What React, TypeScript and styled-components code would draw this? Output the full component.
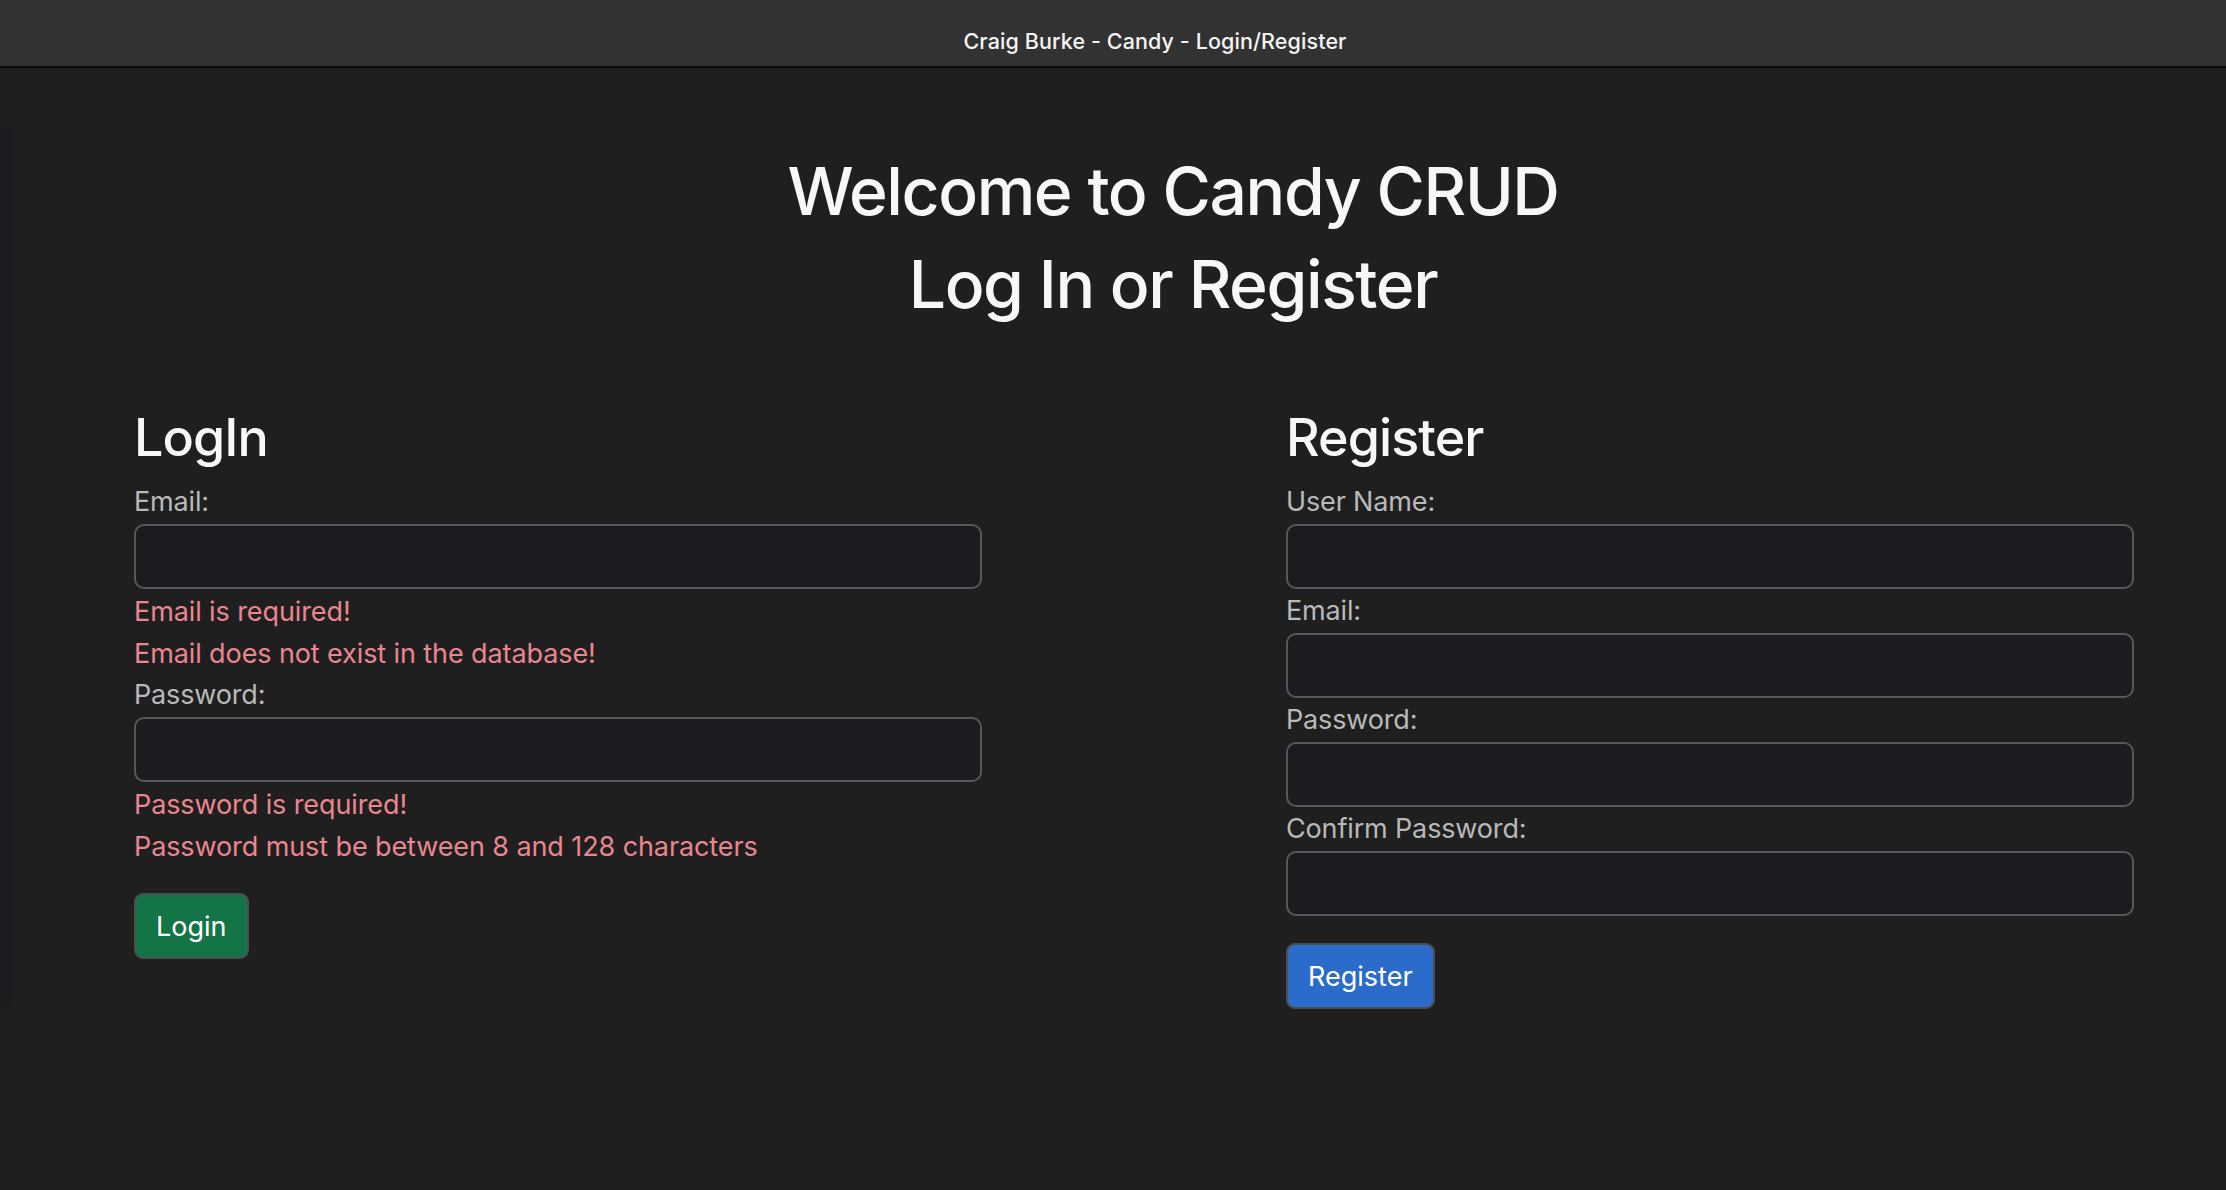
import React from "react";
import styled, { createGlobalStyle } from "styled-components";

const GlobalStyle = createGlobalStyle`
  html, body {
    margin: 0;
    padding: 0;
    background: #1f1f1f;
  }
  body {
    font-family: Inter, "Noto Sans", "Liberation Sans", sans-serif;
  }
  * { box-sizing: border-box; }
`;

const Window = styled.div`
  width: 2226px;
  min-height: 1190px;
  display: flex;
  flex-direction: column;
  background: #1f1f1f;
`;

const TitleBar = styled.header`
  height: 68px;
  flex: 0 0 68px;
  background: #323232;
  border-bottom: 2px solid #0c0c0c;
  display: flex;
  align-items: center;
  justify-content: center;
  padding-left: 84px;
  padding-top: 16px;
  color: #f4f4f4;
  font-size: 21.5px;
  font-weight: 500;
  letter-spacing: 0.1px;
`;

const Body = styled.div`
  display: flex;
  flex: 1;
`;

const SideStrip = styled.div`
  width: 12px;
  flex: 0 0 12px;
  height: 880px;
  margin-top: 59px;
  background: #1b1b20;
`;

const Content = styled.main`
  margin-left: 122px;
  width: 2000px;
  padding-top: 77px;
`;

const Heading = styled.h1`
  margin: 0;
  padding-left: 78px;
  text-align: center;
  font-size: 66px;
  line-height: 93px;
  font-weight: 500;
  color: #f7f7f7;
  letter-spacing: -1.4px;
`;

const Columns = styled.div`
  display: grid;
  grid-template-columns: 848px 848px;
  column-gap: 304px;
  margin-top: 74px;
`;

const FormColumn = styled.form`
  display: flex;
  flex-direction: column;
  align-items: flex-start;
`;

const ColumnTitle = styled.h2`
  margin: 0 0 10px;
  font-size: 52px;
  line-height: 65px;
  font-weight: 500;
  color: #f7f7f7;
  letter-spacing: -0.9px;
`;

const Label = styled.label`
  display: block;
  font-size: 27px;
  line-height: 42px;
  padding-top: 1px;
  margin-bottom: -1px;
  color: #b9b9b9;
  letter-spacing: -0.15px;
`;

const Input = styled.input`
  display: block;
  width: 100%;
  height: 65px;
  margin: 2px 0 0;
  background: #1c1b20;
  border: 2px solid #58585c;
  border-radius: 10px;
  color: #e0e0e0;
  font-size: 28px;
  padding: 0 20px;
  outline: none;
`;

const ErrorText = styled.div`
  font-size: 27px;
  line-height: 42px;
  padding-top: 2px;
  margin-bottom: -2px;
  color: #ea868f;
  letter-spacing: -0.1px;
`;

const Button = styled.button<{ $variant: "success" | "primary" }>`
  margin-top: 27px;
  height: 66px;
  padding: 0 20px;
  font-family: inherit;
  font-size: 27px;
  color: #ffffff;
  border: 2px solid #4e4e4e;
  border-radius: 9px;
  background: ${(p) => (p.$variant === "success" ? "#137446" : "#2b6cca")};
  cursor: pointer;
`;

export default function App() {
  return (
    <>
      <GlobalStyle />
      <Window>
        <TitleBar>Craig Burke - Candy - Login/Register</TitleBar>
        <Body>
          <SideStrip />
          <Content>
            <Heading>
              Welcome to Candy CRUD
              <br />
              Log In or Register
            </Heading>
            <Columns>
              <FormColumn onSubmit={(e) => e.preventDefault()}>
                <ColumnTitle>LogIn</ColumnTitle>
                <Label htmlFor="login-email">Email:</Label>
                <Input id="login-email" type="text" />
                <ErrorText>Email is required!</ErrorText>
                <ErrorText>Email does not exist in the database!</ErrorText>
                <Label htmlFor="login-password">Password:</Label>
                <Input id="login-password" type="password" />
                <ErrorText>Password is required!</ErrorText>
                <ErrorText>Password must be between 8 and 128 characters</ErrorText>
                <Button type="submit" $variant="success">Login</Button>
              </FormColumn>
              <FormColumn onSubmit={(e) => e.preventDefault()}>
                <ColumnTitle>Register</ColumnTitle>
                <Label htmlFor="reg-name">User Name:</Label>
                <Input id="reg-name" type="text" />
                <Label htmlFor="reg-email">Email:</Label>
                <Input id="reg-email" type="text" />
                <Label htmlFor="reg-password">Password:</Label>
                <Input id="reg-password" type="password" />
                <Label htmlFor="reg-confirm">Confirm Password:</Label>
                <Input id="reg-confirm" type="password" />
                <Button type="submit" $variant="primary">Register</Button>
              </FormColumn>
            </Columns>
          </Content>
        </Body>
      </Window>
    </>
  );
}
